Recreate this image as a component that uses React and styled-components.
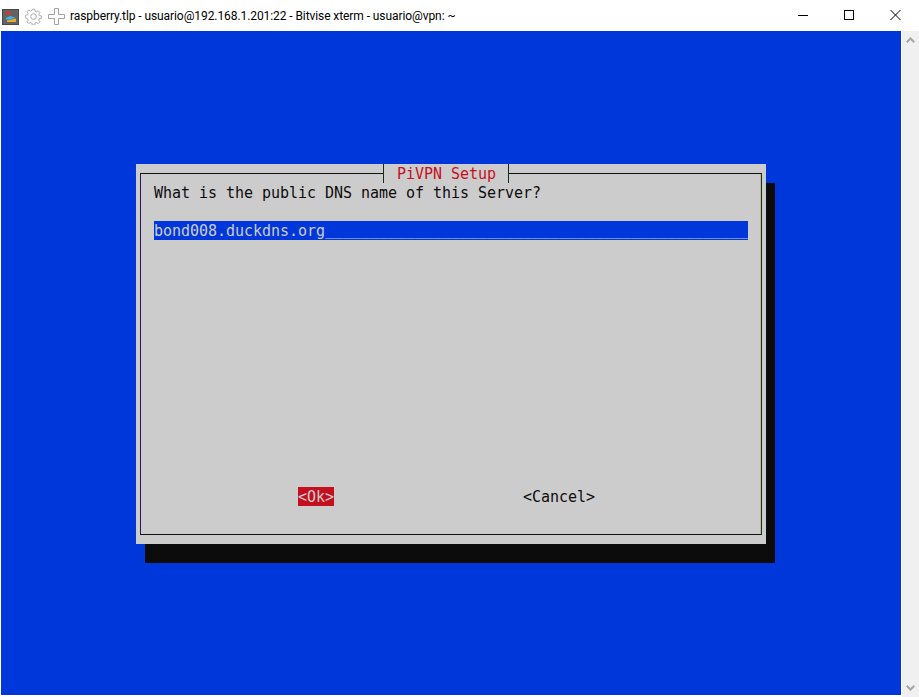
import React from 'react';
import styled, { createGlobalStyle } from 'styled-components';

const GlobalStyle = createGlobalStyle`
  html, body {
    margin: 0;
    padding: 0;
    background: #fff;
    overflow: hidden;
  }
`;

const Window = styled.div`
  width: 919px;
  height: 697px;
  display: flex;
  flex-direction: column;
  background: #fff;
`;

const TitleBar = styled.header`
  height: 31px;
  flex: none;
  display: flex;
  align-items: center;
  padding-left: 2px;
  font-family: 'Segoe UI', Roboto, 'Open Sans', sans-serif;
  font-size: 12px;
  letter-spacing: -0.08px;
  color: #000;
`;

const AppIcon = styled.svg`
  width: 17px;
  height: 16px;
  margin: 3px 6px 0 0;
`;

const ToolIcon = styled.svg`
  width: 17px;
  height: 17px;
  margin: 2px ${(p) => p.$gap}px 0 0;
  fill: none;
  stroke: #a2a2a2;
`;

const Title = styled.span`
  flex: 1;
  white-space: nowrap;
`;

const Controls = styled.div`
  display: flex;
  width: 138px;
  height: 30px;
  margin-bottom: 1px;
`;

const Control = styled.button`
  width: 46px;
  height: 30px;
  border: 0;
  padding: 0;
  background: none;
  display: flex;
  align-items: center;
  justify-content: center;

  svg {
    width: 12px;
    height: 12px;
    fill: none;
    stroke: #000;
    stroke-width: 1;
  }
`;

const Body = styled.div`
  flex: 1;
  display: flex;
  min-height: 0;
  padding-left: 1px;
`;

const Terminal = styled.main`
  flex: 1;
  margin-bottom: 2px;
  background: #0037da;
  padding: 133px 0 0 135px;
  font-family: 'DejaVu Sans Mono', 'Liberation Mono', monospace;
  font-size: 15px;
  line-height: 21px;
  letter-spacing: -0.03px;
`;

const Dialog = styled.section`
  width: 630px;
  height: 380px;
  box-sizing: border-box;
  padding: 9px 4px;
  background: #cccccc;
  box-shadow: 9px 19px 0 #0c0c0c;
`;

const Frame = styled.div`
  position: relative;
  height: 100%;
  box-sizing: border-box;
  display: flex;
  flex-direction: column;
  padding: 9px 13px 28px;
  border: 1px solid #141018;
  border-left-color: #2a1660;
  border-right-color: #20301c;
  box-shadow: 1px 0 0 #a8d8d8, inset -1px 0 0 #cdb48c;
`;

const DialogTitle = styled.h1`
  position: absolute;
  top: -10px;
  left: 242px;
  margin: 0;
  width: 126px;
  height: 19px;
  box-sizing: border-box;
  padding-left: 13px;
  background: #cccccc;
  border-left: 1px solid #1c2c14;
  border-right: 1px solid #0c2c1c;
  font: inherit;
  color: #c50f1f;
`;

const Prompt = styled.p`
  height: 19px;
  margin: 0 0 19px;
  color: #0c0c0c;
`;

const Input = styled.div`
  height: 19px;
  display: flex;
  align-items: flex-start;
  overflow: hidden;
  background: #0037da;
  color: #cccccc;
  white-space: pre;
`;

const InputFill = styled.span`
  line-height: 19px;
`;

const Buttons = styled.div`
  margin-top: auto;
  display: flex;
  padding-left: 144px;
`;

const DialogButton = styled.span`
  display: block;
  height: 19px;
  overflow: hidden;
  background: ${(p) => (p.$active ? '#c50f1f' : 'transparent')};
  color: ${(p) => (p.$active ? '#cccccc' : '#0c0c0c')};
  margin-right: ${(p) => (p.$active ? '189px' : '0')};
`;

const Scrollbar = styled.aside`
  width: 17px;
  margin-left: 1px;
  background: #f0f0f0;
  display: flex;
  flex-direction: column;
  justify-content: space-between;
`;

const ScrollArrow = styled.div`
  height: 18px;
  display: flex;
  align-items: center;
  justify-content: center;

  svg {
    width: 9px;
    height: 6px;
    fill: none;
    stroke: #a6a6a6;
    stroke-width: 2;
  }
`;

export default function App() {
  return (
    <>
      <GlobalStyle />
      <Window>
        <TitleBar>
          <AppIcon viewBox="0 0 17 16">
            <rect x=".5" y=".5" width="16" height="15" fill="#636363" stroke="#4a4a4a" />
            <path d="M4 2h2l4 4H6L4 5z" fill="#d8372a" />
            <path d="M4 9l4-2 4 1 1 1-5 1.5H4z" fill="#38b6e8" />
            <path d="M5 11.5l9-2v3.5H5z" fill="#f0a82c" />
          </AppIcon>
          <ToolIcon viewBox="0 0 18 18" $gap={6}>
            <circle cx="9" cy="9" r="3" />
            <path d="M7.6 1h2.8l.4 2.3 1.5.6 1.9-1.3 2 2-1.3 1.9.6 1.5 2.3.4v2.8l-2.3.4-.6 1.5 1.3 1.9-2 2-1.9-1.3-1.5.6-.4 2.3H7.6l-.4-2.3-1.5-.6-1.9 1.3-2-2 1.3-1.9-.6-1.5L.2 10.4V7.6l2.3-.4.6-1.5-1.3-1.9 2-2 1.9 1.3 1.5-.6z" transform="translate(.4 .4) scale(.95)" />
          </ToolIcon>
          <ToolIcon viewBox="0 0 17 17" $gap={5}>
            <path d="M6.5.5h4v6h6v4h-6v6h-4v-6h-6v-4h6z" />
          </ToolIcon>
          <Title>raspberry.tlp - usuario@192.168.1.201:22 - Bitvise xterm - usuario@vpn: ~</Title>
          <Controls>
            <Control aria-label="Minimize">
              <svg viewBox="0 0 12 12"><path d="M0 6.5h10" /></svg>
            </Control>
            <Control aria-label="Maximize">
              <svg viewBox="0 0 12 12"><rect x=".5" y="1.5" width="9" height="9" /></svg>
            </Control>
            <Control aria-label="Close">
              <svg viewBox="0 0 12 12"><path d="M.5 1l10 10M10.5 1L.5 11" /></svg>
            </Control>
          </Controls>
        </TitleBar>
        <Body>
          <Terminal>
            <Dialog>
              <Frame>
                <DialogTitle>PiVPN Setup</DialogTitle>
                <Prompt>What is the public DNS name of this Server?</Prompt>
                <Input>
                  <span>bond008.duckdns.org</span>
                  <InputFill>{'_'.repeat(47)}</InputFill>
                </Input>
                <Buttons>
                  <DialogButton $active>&lt;Ok&gt;</DialogButton>
                  <DialogButton>&lt;Cancel&gt;</DialogButton>
                </Buttons>
              </Frame>
            </Dialog>
          </Terminal>
          <Scrollbar>
            <ScrollArrow>
              <svg viewBox="0 0 9 6"><path d="M.7 5.3L4.5 1.5l3.8 3.8" /></svg>
            </ScrollArrow>
            <ScrollArrow>
              <svg viewBox="0 0 9 6"><path d="M.7.7l3.8 3.8L8.3.7" /></svg>
            </ScrollArrow>
          </Scrollbar>
        </Body>
      </Window>
    </>
  );
}
